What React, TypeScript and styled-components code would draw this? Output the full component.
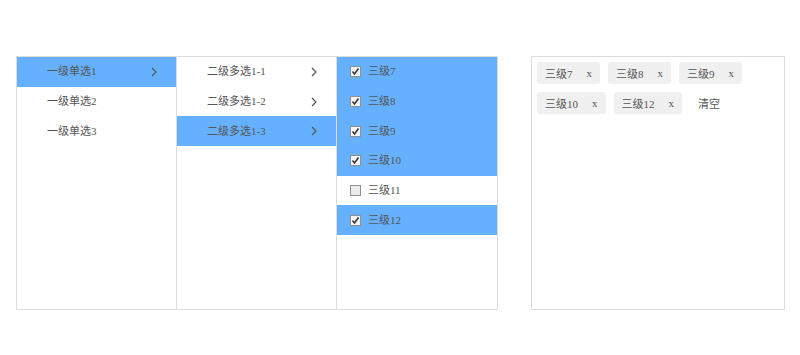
import React from "react";
import styled, { createGlobalStyle } from "styled-components";

const Global = createGlobalStyle`
  html, body { margin: 0; padding: 0; background: #fff; }
  body { font-family: "Liberation Serif", "Noto Sans CJK SC", serif; font-size: 11px; color: #555; }
`;

const Page = styled.div`
  display: flex;
  align-items: flex-start;
  gap: 33px;
  padding: 56px 0 0 16px;
`;

const Cascader = styled.div`
  display: flex;
  border: 1px solid #ddd;
  height: 252px;
`;

const Column = styled.ul<{ $first?: boolean; $w: number }>`
  list-style: none;
  margin: 0;
  padding: 0;
  width: ${(p) => p.$w}px;
  border-left: ${(p) => (p.$first ? "none" : "1px solid #ddd")};
`;

const Row = styled.li<{ $active?: boolean; $check?: boolean }>`
  display: flex;
  align-items: center;
  height: 29.7px;
  padding: ${(p) => (p.$check ? "0 0 0 13px" : "0 18px 0 30px")};
  background: ${(p) => (p.$active ? "#66b1ff" : "transparent")};
  color: #555;
  box-sizing: border-box;
`;

const Label = styled.span`
  flex: 1;
  line-height: 1;
`;

const Chevron = styled.svg`
  width: 8px;
  height: 10px;
  flex: none;
`;

const Box = styled.span<{ $on?: boolean }>`
  width: 11px;
  height: 11px;
  box-sizing: border-box;
  border: 1px solid #8f8f8f;
  background: ${(p) => (p.$on ? "#f4f4f4" : "#ececec")};
  margin-right: 7px;
  display: inline-flex;
  align-items: center;
  justify-content: center;
  flex: none;
`;

const Selected = styled.div`
  border: 1px solid #ddd;
  padding: 5px 0 0 5px;
  display: flex;
  flex-wrap: wrap;
  align-content: flex-start;
  gap: 8px;
  width: 247px;
  height: 247px;
`;

const Tag = styled.span`
  display: inline-flex;
  align-items: center;
  height: 22px;
  padding: 0 8px;
  background: #f0f0f0;
  border-radius: 3px;
  color: #555;
`;

const Close = styled.span`
  margin-left: 14px;
  font-family: "Liberation Serif", serif;
`;

const Clear = styled.span`
  display: inline-flex;
  align-items: center;
  height: 22px;
  padding: 0 8px;
  color: #555;
`;

const Arrow = () => (
  <Chevron viewBox="0 0 8 10">
    <path d="M2 1 L6 5 L2 9" fill="none" stroke="#555" strokeWidth="1.2" />
  </Chevron>
);

const Check = ({ on }: { on: boolean }) => (
  <Box $on={on}>
    {on && (
      <svg width="9" height="9" viewBox="0 0 9 9">
        <path d="M1.5 4.5 L3.5 7 L7.5 1.5" fill="none" stroke="#333" strokeWidth="1.5" />
      </svg>
    )}
  </Box>
);

const level1 = ["一级单选1", "一级单选2", "一级单选3"];
const level2 = ["二级多选1-1", "二级多选1-2", "二级多选1-3"];
const level3: [string, boolean][] = [
  ["三级7", true],
  ["三级8", true],
  ["三级9", true],
  ["三级10", true],
  ["三级11", false],
  ["三级12", true],
];

export default function App() {
  return (
    <>
      <Global />
      <Page>
        <Cascader>
          <Column $first $w={159}>
            {level1.map((t, i) => (
              <Row key={t} $active={i === 0}>
                <Label>{t}</Label>
                {i === 0 && <Arrow />}
              </Row>
            ))}
          </Column>
          <Column $w={159}>
            {level2.map((t, i) => (
              <Row key={t} $active={i === 2}>
                <Label>{t}</Label>
                <Arrow />
              </Row>
            ))}
          </Column>
          <Column $w={160}>
            {level3.map(([t, on]) => (
              <Row key={t} $active={on} $check>
                <Check on={on} />
                <Label>{t}</Label>
              </Row>
            ))}
          </Column>
        </Cascader>
        <Selected>
          {level3
            .filter(([, on]) => on)
            .map(([t]) => (
              <Tag key={t}>
                {t}
                <Close>x</Close>
              </Tag>
            ))}
          <Clear>清空</Clear>
        </Selected>
      </Page>
    </>
  );
}
